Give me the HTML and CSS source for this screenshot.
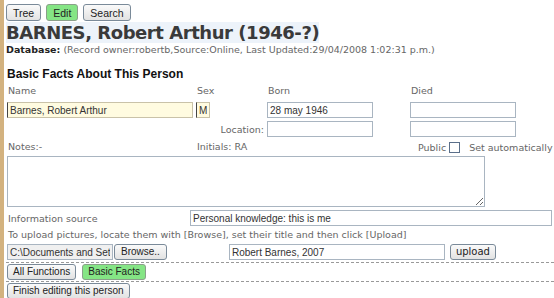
FILE: index.html
```html
<!DOCTYPE html>
<html lang="en">
<head>
    <meta charset="UTF-8">
    <title>Edit person</title>
    <link rel="stylesheet" href="styles.css">
</head>
<body>
    <div class="page">
        <div class="top-btns">
            <button class="btn">Tree</button>
            <button class="btn green">Edit</button>
            <button class="btn">Search</button>
        </div>
        <h1><span class="title">BARNES, Robert Arthur (1946-?)</span></h1>
        <div class="dbline"><b>Database:</b> (Record owner:robertb,Source:Online, Last Updated:29/04/2008 1:02:31 p.m.)</div>

        <h2>Basic Facts About This Person</h2>
        <div class="facts">
            <div class="lbl">Name</div>
            <div class="lbl">Sex</div>
            <div class="lbl">Born</div>
            <div class="lbl">Died</div>

            <div class="first"><input class="txt yellow name-in" type="text" value="Barnes, Robert Arthur"></div>
            <div class="first"><input class="txt yellow sex-in" type="text" value="M"></div>
            <div class="first"><input class="txt date-in" type="text" value="28 may 1946"></div>
            <div class="first"><input class="txt date-in" type="text" value=""></div>

            <div></div>
            <div class="lbl loc">Location:</div>
            <div><input class="txt date-in" type="text" value=""></div>
            <div><input class="txt date-in" type="text" value=""></div>

            <div class="lbl">Notes:-</div>
            <div class="lbl">Initials: RA</div>
            <div></div>
            <div class="lbl public">Public <span class="chk"></span> <span class="auto">Set automatically</span></div>
        </div>
        <textarea class="notes"></textarea>

        <div class="src-row">
            <span class="lbl">Information source</span>
            <input class="txt src-in" type="text" value="Personal knowledge: this is me">
        </div>
        <div class="lbl hint">To upload pictures, locate them with [Browse], set their title and then click [Upload]</div>
        <div class="upload-row">
            <input class="txt file-in" type="text" value="C:\Documents and Settings\robert\pic.jpg">
            <button class="btn browse">Browse..</button>
            <input class="txt pic-title" type="text" value="Robert Barnes, 2007">
            <button class="btn up">upload</button>
        </div>
        <div class="func-row">
            <button class="btn">All Functions</button>
            <button class="btn green">Basic Facts</button>
        </div>
        <div class="finish-row">
            <button class="btn">Finish editing this person</button>
        </div>
    </div>
</body>
</html>
```

FILE: styles.css
```css
body {
    margin: 0;
    background: #fff;
    font-family: "DejaVu Sans", Verdana, sans-serif;
    color: #333;
}
.page {
    border-left: 4px solid #d3b27f;
    padding: 4px 0 0 2px;
    height: 298px;
    box-sizing: border-box;
}
.btn {
    font-family: "Liberation Sans", Arial, sans-serif;
    font-size: 10px;
    color: #222;
    height: 16px;
    padding: 0 5px;
    border: 1px solid #7a8a99;
    border-radius: 3px;
    background: linear-gradient(#fafafa, #e2e2e2);
    margin: 0;
    line-height: 14px;
}
.btn.green {
    background: #85e585;
    border-color: #8aa08a;
}
.top-btns {
    display: flex;
    gap: 5px;
}
.top-btns .btn {
    height: 17px;
    padding: 0 6px;
    font-size: 10.5px;
}
h1 {
    margin: 1px 0 0 0;
    font-size: 18px;
    letter-spacing: -0.45px;
    line-height: 22px;
    font-weight: bold;
    color: #3a3a3a;
}
.title {
    background: #edf3fa;
}
.dbline {
    font-size: 9.5px;
    color: #666;
    line-height: 11px;
}
.dbline b {
    color: #222;
}
h2 {
    font-family: "Liberation Sans", Arial, sans-serif;
    font-size: 12px;
    margin: 12px 0 0 1px;
    color: #111;
    line-height: 14px;
}
.lbl {
    font-size: 9.5px;
    color: #666;
}
.facts {
    display: grid;
    grid-template-columns: 189px 71px 143px auto;
    row-gap: 3px;
    padding-left: 1px;
    margin-top: 4px;
    align-items: center;
}
.facts > .lbl {
    padding-left: 1px;
}
.facts > .first {
    margin-top: 3px;
}
.txt {
    font-family: "Liberation Sans", Arial, sans-serif;
    font-size: 10px;
    color: #333;
    height: 16px;
    border: 1px solid #a9b5c1;
    padding: 0 2px;
    box-sizing: border-box;
    margin: 0;
    background: #fff;
    display: block;
}
.yellow {
    background: #fffbe0;
    border-color: #c9c2a8;
    border-left: 1px solid #444;
}
.name-in {
    width: 186px;
}
.sex-in {
    width: 14px;
}
.date-in {
    width: 106px;
}
.facts > .loc {
    text-align: right;
    padding-right: 3px;
}
.facts > .public {
    padding-left: 8px;
    display: flex;
    align-items: center;
    gap: 3px;
    margin-top: 2px;
}
.chk {
    display: inline-block;
    width: 9px;
    height: 9px;
    border: 1px solid #5a6f8a;
    background: #fff;
}
.auto {
    margin-left: 6px;
}
.notes {
    display: block;
    width: 478px;
    height: 51px;
    margin: 3px 0 0 1px;
    border: 1px solid #a9b5c1;
    box-sizing: border-box;
    resize: both;
}
.src-row {
    display: flex;
    align-items: center;
    margin-top: 3px;
    padding-left: 2px;
}
.src-row .lbl {
    width: 182px;
}
.src-in {
    width: 362px;
}
.hint {
    padding-left: 2px;
    margin-top: 3px;
    line-height: 12px;
}
.upload-row {
    display: flex;
    align-items: center;
    margin-top: 3px;
    padding-left: 1px;
    padding-bottom: 2px;
    border-bottom: 1px dashed #999;
}
.file-in {
    width: 106px;
    background: #f0f0f0;
    overflow: hidden;
}
.browse {
    margin-left: 1px;
    padding: 0 6px;
}
.pic-title {
    width: 216px;
    margin-left: 62px;
}
.up {
    margin-left: 5px;
    padding: 0 5px;
    font-family: "DejaVu Sans", Verdana, sans-serif;
}
.func-row {
    display: flex;
    gap: 6px;
    padding: 1px 0 1px 1px;
    border-bottom: 1px dashed #999;
}
.finish-row {
    display: flex;
    padding: 1px 0 0 1px;
}
```
